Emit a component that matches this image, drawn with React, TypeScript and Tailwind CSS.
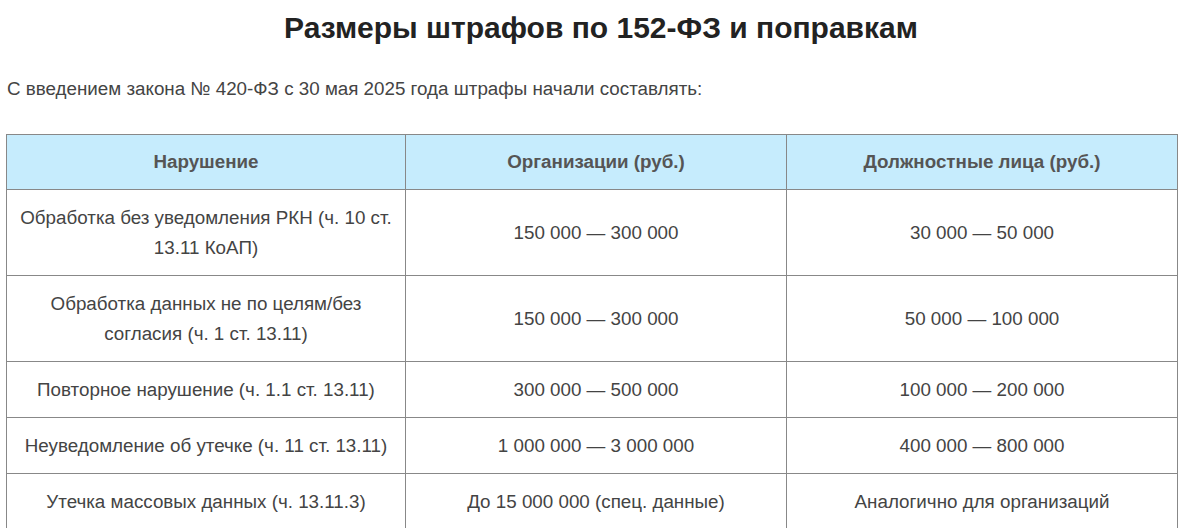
import React from "react";

type Row = {
  violation: string;
  org: string;
  official: string;
};

const rows: Row[] = [
  {
    violation: "Обработка без уведомления РКН (ч. 10 ст. 13.11 КоАП)",
    org: "150 000 — 300 000",
    official: "30 000 — 50 000",
  },
  {
    violation: "Обработка данных не по целям/без согласия (ч. 1 ст. 13.11)",
    org: "150 000 — 300 000",
    official: "50 000 — 100 000",
  },
  {
    violation: "Повторное нарушение (ч. 1.1 ст. 13.11)",
    org: "300 000 — 500 000",
    official: "100 000 — 200 000",
  },
  {
    violation: "Неуведомление об утечке (ч. 11 ст. 13.11)",
    org: "1 000 000 — 3 000 000",
    official: "400 000 — 800 000",
  },
  {
    violation: "Утечка массовых данных (ч. 13.11.3)",
    org: "До 15 000 000 (спец. данные)",
    official: "Аналогично для организаций",
  },
];

const App = () => {
  return (
    <div className="min-h-[528px] bg-white font-['Liberation_Sans',Arial,sans-serif] text-[#444]">
      <h1 className="pt-[8px] pl-[20px] text-center text-[30px] font-bold leading-[40px] text-[#222]">
        Размеры штрафов по 152-ФЗ и поправкам
      </h1>

      <p className="mt-[27px] pl-[7px] text-[18.8px] leading-[28px]">
        С введением закона № 420-ФЗ с 30 мая 2025 года штрафы начали составлять:
      </p>

      <table className="mt-[31px] ml-[6px] w-[1171px] table-fixed border-collapse text-[18.8px] leading-[30px]">
        <colgroup>
          <col className="w-[399px]" />
          <col className="w-[381px]" />
          <col className="w-[391px]" />
        </colgroup>
        <thead>
          <tr className="bg-[#c6ecfd]">
            <th className="border border-[#888] px-[12px] pt-[12px] pb-[12px] font-bold text-[#555]">Нарушение</th>
            <th className="border border-[#888] px-[12px] pt-[12px] pb-[12px] font-bold text-[#555]">Организации (руб.)</th>
            <th className="border border-[#888] px-[12px] pt-[12px] pb-[12px] font-bold text-[#555]">Должностные лица (руб.)</th>
          </tr>
        </thead>
        <tbody>
          {rows.map((r) => (
            <tr key={r.violation}>
              <td className="border border-[#888] px-[12px] pt-[13px] pb-[12px] text-center">{r.violation}</td>
              <td className="border border-[#888] px-[12px] pt-[13px] pb-[12px] text-center">{r.org}</td>
              <td className="border border-[#888] px-[12px] pt-[13px] pb-[12px] text-center">{r.official}</td>
            </tr>
          ))}
        </tbody>
      </table>
    </div>
  );
};

export default App;
